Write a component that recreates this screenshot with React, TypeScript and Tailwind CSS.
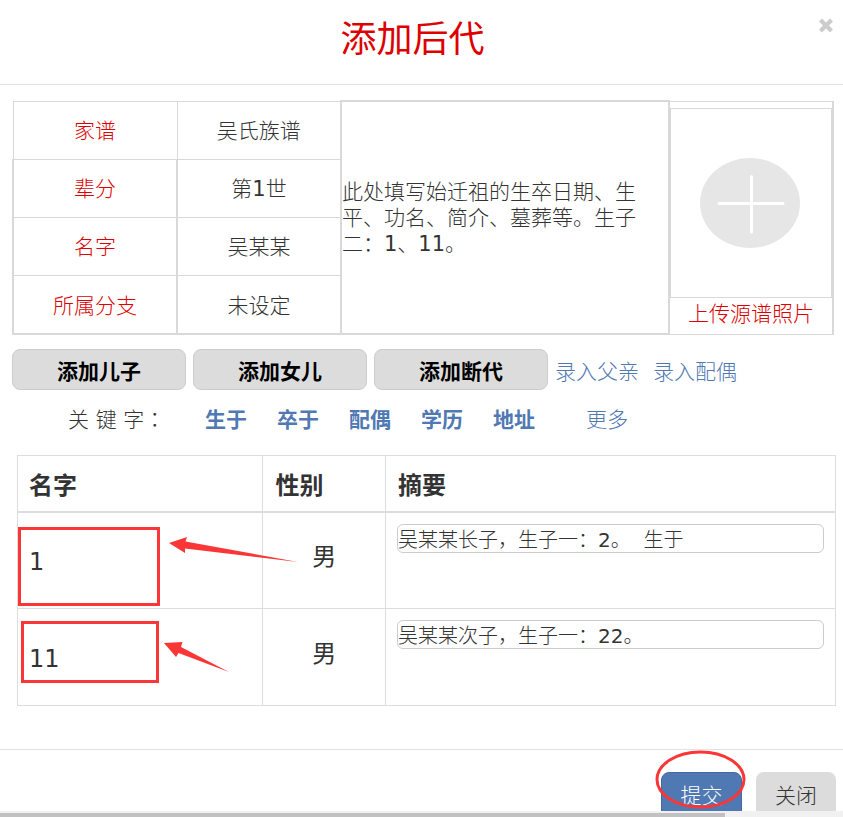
import { clsx } from 'clsx';

const fields = [
  { label: '家谱', value: '吴氏族谱' },
  { label: '辈分', value: '第1世' },
  { label: '名字', value: '吴某某' },
  { label: '所属分支', value: '未设定' },
];

const addActions = ['添加儿子', '添加女儿', '添加断代'];
const entryLinks = ['录入父亲', '录入配偶'];
const keywords = ['生于', '卒于', '配偶', '学历', '地址'];

const children = [
  { name: '1', gender: '男', summary: '吴某某长子，生子一：2。  生于' },
  { name: '11', gender: '男', summary: '吴某某次子，生子一：22。' },
];

const regular = "font-['DejaVu_Sans','Noto_Sans_CJK_SC',sans-serif]";

function ModalHeader() {
  return (
    <header className="relative border-b border-[#e2e2e2] pt-4 pb-5">
      <h1 className={clsx(regular, 'pr-[18px] text-center text-4xl leading-12 text-[#dd0000]')}>添加后代</h1>
      <button type="button" aria-label="关闭窗口" className="absolute top-[18px] right-[9px]">
        <svg width="16" height="16" viewBox="0 0 16 16" aria-hidden="true">
          <path d="M2.500 2L13.500 13M13.500 2L2.500 13" stroke="#cccccc" strokeWidth="4.200" />
        </svg>
      </button>
    </header>
  );
}

function PhotoUpload() {
  return (
    <button type="button" className="block w-full pt-1.5 pb-px text-[#dd0000]">
      <span className="flex h-[190px] items-center justify-center border border-[#d9d9d9]">
        <svg width="102" height="90" viewBox="0 0 102 90" aria-hidden="true">
          <ellipse cx="50" cy="45" rx="50" ry="45" fill="#e6e6e6" />
          <path d="M19 45.500H83M51.500 18.500V74" stroke="#fff" strokeWidth="3" strokeLinecap="round" />
        </svg>
      </span>
      <span className="block leading-8">上传源谱照片</span>
    </button>
  );
}

function ProfileTable() {
  return (
    <table className="w-full table-fixed border-collapse text-center">
      <colgroup>
        <col className="w-1/5" />
        <col className="w-1/5" />
        <col className="w-2/5" />
        <col className="w-1/5" />
      </colgroup>
      <tbody>
        {fields.map((field, i) => {
          const cell = clsx(
            'border-y border-[#d9d9d9] pt-1',
            i === 0 ? 'border-x' : 'border-x-2',
            i === 3 && 'border-b-2',
          );
          return (
            <tr key={field.label} className={i === 3 ? 'h-[59px]' : 'h-[58px]'}>
              <th scope="row" className={clsx(cell, 'font-normal text-[#dd0000]')}>
                {field.label}
              </th>
              <td className={cell}>{field.value}</td>
              {i === 0 && (
                <>
                  <td rowSpan={4} className="border-2 border-[#d9d9d9] text-left leading-[26px]">
                    此处填写始迁祖的生卒日期、生平、功名、简介、墓葬等。生子二：1、11。
                  </td>
                  <td rowSpan={4} className="border border-r-2 border-[#d9d9d9] p-0 align-top">
                    <PhotoUpload />
                  </td>
                </>
              )}
            </tr>
          );
        })}
      </tbody>
    </table>
  );
}

function Toolbar() {
  return (
    <div className="mt-3.5 flex items-center gap-[7px]">
      {addActions.map((action) => (
        <button
          key={action}
          type="button"
          className={clsx(
            regular,
            'h-[41px] w-[174px] rounded-lg border border-[#cccccc] bg-[#dcdcdc] pt-1.5 font-bold text-black',
          )}
        >
          {action}
        </button>
      ))}
      <div className="flex gap-3.5 pt-1.5 text-[#5078b3]">
        {entryLinks.map((link) => (
          <a key={link} href="#">
            {link}
          </a>
        ))}
      </div>
    </div>
  );
}

function Keywords() {
  return (
    <div className="mt-3.5 flex items-center pl-14 leading-8">
      <span className="w-[137px] font-['DejaVu_Sans','Noto_Sans_CJK_TC_Light','Noto_Sans_CJK_TC',sans-serif]">
        关 键 字：
      </span>
      <div className={clsx(regular, 'flex gap-[30px] font-bold text-[#5078b3]')}>
        {keywords.map((word) => (
          <a key={word} href="#">
            {word}
          </a>
        ))}
      </div>
      <a href="#" className="ml-[51px] text-[#5078b3]">
        更多
      </a>
    </div>
  );
}

function Mark({ row }: { row: number }) {
  if (row === 0) {
    return (
      <>
        <div className="absolute top-3.5 left-0 h-[79px] w-[142px] border-3 border-[#fa3636]" />
        <svg className="absolute top-5 left-[150px] z-10" width="132" height="34" viewBox="0 0 132 34" aria-hidden="true">
          <path d="M1 10L19 4L17.500 8.500L130 29L17 15.500V20Z" fill="#fa3636" />
        </svg>
      </>
    );
  }
  return (
    <>
      <div className="absolute top-3 left-[3px] h-[62px] w-[138px] border-3 border-[#fa3636]" />
      <svg className="absolute top-8 left-[146px]" width="68" height="34" viewBox="0 0 68 34" aria-hidden="true">
        <path d="M0 2L18.500 1L17 6L65 31L14.500 12L12 16Z" fill="#fa3636" />
      </svg>
    </>
  );
}

function ChildrenTable() {
  return (
    <table className={clsx(regular, 'mt-[19px] ml-[5px] w-[calc(100%-3px)] table-fixed border-collapse text-2xl')}>
      <colgroup>
        <col className="w-[30%]" />
        <col className="w-[15%]" />
        <col />
      </colgroup>
      <thead>
        <tr className="h-14 text-left font-bold">
          <th className="border border-b-2 border-[#dddddd] pt-1.5 pl-[11px]">名字</th>
          <th className="border border-b-2 border-[#dddddd] pt-1.5 pl-3">性别</th>
          <th className="border border-b-2 border-[#dddddd] pt-1.5 pl-3">摘要</th>
        </tr>
      </thead>
      <tbody>
        {children.map((child, i) => (
          <tr key={child.name} className="h-[97px]">
            <td className="relative border border-[#dddddd] pt-1 pl-[11px]">
              {child.name}
              <Mark row={i} />
            </td>
            <td className="border border-[#dddddd] pb-1.5 text-center">{child.gender}</td>
            <td className="border border-[#dddddd] px-[11px] pt-[11px] align-top">
              <input
                type="text"
                aria-label={`摘要 ${child.name}`}
                defaultValue={child.summary}
                className="block h-[29px] w-full rounded-md border border-[#cccccc] font-['DejaVu_Sans','Noto_Sans_CJK_SC_Light','Noto_Sans_CJK_SC',sans-serif] text-xl"
              />
            </td>
          </tr>
        ))}
      </tbody>
    </table>
  );
}

function ModalFooter() {
  return (
    <footer className="mt-[43px] flex justify-end gap-3.5 border-t border-[#e2e2e2] pt-[22px] pr-[7px]">
      <div className="relative">
        <button type="button" className="h-12 w-[81px] rounded-lg border border-[#45699f] bg-[#5078b3] pt-0.5 text-white">
          提交
        </button>
        <svg className="absolute -top-[22px] -left-1.5" width="92" height="60" viewBox="0 0 92 60" aria-hidden="true">
          <ellipse cx="45.500" cy="29.500" rx="43.500" ry="27.500" fill="none" stroke="#fa3636" strokeWidth="3" />
        </svg>
      </div>
      <button type="button" className="h-12 w-20 rounded-lg bg-[#dcdcdc] pt-0.5">
        关闭
      </button>
    </footer>
  );
}

export default function App() {
  return (
    <div className="flex h-screen flex-col bg-white font-['DejaVu_Sans','Noto_Sans_CJK_SC_Light','Noto_Sans_CJK_SC',sans-serif] text-[21px] text-[#333333]">
      <div className="flex-1 overflow-hidden">
        <ModalHeader />
        <main className="pt-[15px] pr-[9px] pl-3">
          <ProfileTable />
          <Toolbar />
          <Keywords />
          <ChildrenTable />
        </main>
        <ModalFooter />
      </div>
      <div className="h-1.5 bg-[#f1f1f1] pt-0.5">
        <div className="h-1 w-[86%] bg-[#c1c1c1]" />
      </div>
    </div>
  );
}
